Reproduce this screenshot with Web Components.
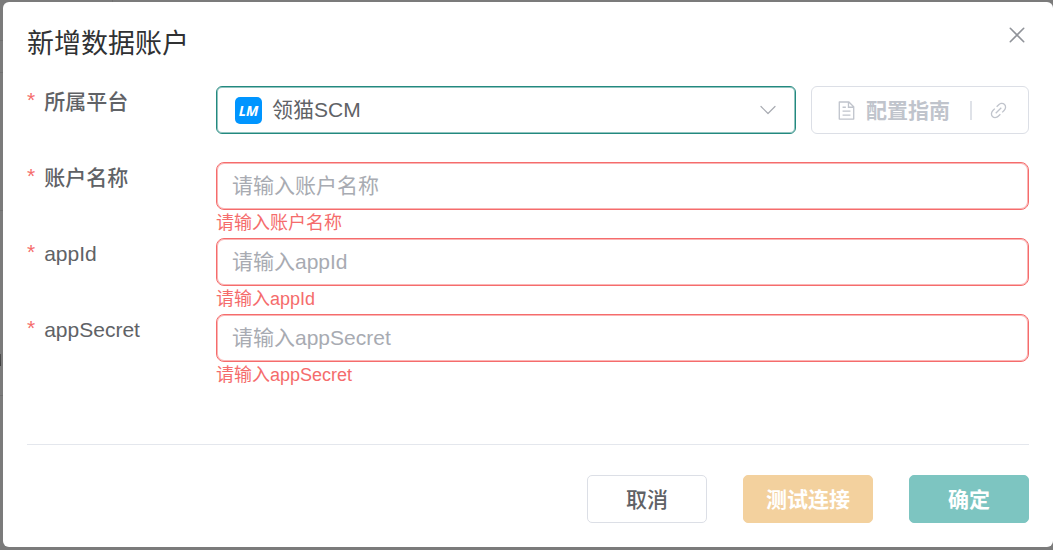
<!DOCTYPE html>
<html lang="zh-CN">
<head>
<meta charset="utf-8">
<meta name="viewport" content="width=device-width, initial-scale=1">
<title>新增数据账户</title>
<style>
    body {
        margin: 0;
        min-height: 100vh;
        font-family: "Liberation Sans", "Noto Sans CJK SC", sans-serif;
        font-size: 21px;
        color: #606266;
        background-color: #7b7b7b;
        background-image:
            linear-gradient(#707070, #707070), linear-gradient(#707070, #707070),
            linear-gradient(#707070, #707070), linear-gradient(#707070, #707070),
            linear-gradient(#707070, #707070), linear-gradient(#505050, #404040);
        background-repeat: no-repeat;
        background-size: 3px 1px, 3px 1px, 3px 1px, 3px 1px, 1px 2px, 1px 12px;
        background-position: 0 40px, 0 72px, 0 210px, 0 395px, 112px 0, 0 354px;
    }
</style>
</head>
<body>
<account-dialog heading="新增数据账户">
    <form-row label="所属平台">
        <platform-select></platform-select>
        <guide-button>配置指南</guide-button>
    </form-row>
    <form-row label="账户名称">
        <text-field name="账户名称"></text-field>
    </form-row>
    <form-row label="appId">
        <text-field name="appId"></text-field>
    </form-row>
    <form-row label="appSecret">
        <text-field name="appSecret"></text-field>
    </form-row>
    <dialog-button slot="footer">取消</dialog-button>
    <dialog-button slot="footer" type="warning">测试连接</dialog-button>
    <dialog-button slot="footer" type="primary">确定</dialog-button>
</account-dialog>

<script>
const dialogTemplate = document.createElement('template');
dialogTemplate.innerHTML = `
    <style>
        :host {
            display: block;
            padding: 2px 0 3px 3px;
        }
        .dialog {
            box-sizing: border-box;
            padding: 24px;
            border-radius: 6px;
            background-color: white;
        }
        header {
            display: flex;
            justify-content: space-between;
            align-items: flex-start;
            height: 60px;
        }
        h2 {
            margin: 0;
            font-size: 27px;
            font-weight: 400;
            line-height: 36px;
            color: #303133;
        }
        .close {
            display: flex;
            padding: 0;
            border: none;
            background: none;
            color: #909399;
            cursor: pointer;
        }
        .close svg {
            width: 24px;
            height: 18px;
        }
        .body {
            display: flex;
            flex-direction: column;
            padding-bottom: 54px;
        }
        footer {
            display: flex;
            justify-content: flex-end;
            gap: 36px;
            padding-top: 30px;
            border-top: 1px solid #e4e7ed;
        }
    </style>

    <section class="dialog" role="dialog" aria-labelledby="heading">
        <header>
            <h2 id="heading"></h2>
            <button class="close" type="button" aria-label="关闭">
                <svg viewBox="0 0 24 18" fill="none" stroke="currentColor" stroke-width="1.6" stroke-linecap="round">
                    <path d="M5.3 2.3l13.4 13.4M18.7 2.3L5.3 15.7"/>
                </svg>
            </button>
        </header>
        <div class="body"><slot></slot></div>
        <footer><slot name="footer"></slot></footer>
    </section>
`;

class AccountDialog extends HTMLElement {

    constructor() {
        super();
        this.attachShadow({ mode: 'open' });
        this.shadowRoot.appendChild(dialogTemplate.content.cloneNode(true));
    }

    connectedCallback() {
        this.shadowRoot.querySelector('h2').textContent = this.getAttribute('heading');
        this.shadowRoot.querySelector('.close').addEventListener('click', () => this.remove());
    }
}

const rowTemplate = document.createElement('template');
rowTemplate.innerHTML = `
    <style>
        :host {
            display: grid;
            grid-template-columns: 174px minmax(0, 1fr);
            column-gap: 15px;
            min-height: 76px;
        }
        .label {
            display: flex;
            gap: 9px;
            height: 32px;
            line-height: 32px;
            font-weight: 500;
        }
        .star {
            color: #f56c6c;
            font-weight: 400;
            line-height: 28px;
        }
        .content {
            display: flex;
            align-items: flex-start;
            gap: 15px;
        }
    </style>

    <div class="label"><span class="star" aria-hidden="true">*</span><label></label></div>
    <div class="content"><slot></slot></div>
`;

class FormRow extends HTMLElement {

    constructor() {
        super();
        this.attachShadow({ mode: 'open' });
        this.shadowRoot.appendChild(rowTemplate.content.cloneNode(true));
    }

    connectedCallback() {
        const label = this.shadowRoot.querySelector('label');
        label.textContent = this.getAttribute('label');
        // the control lives in another shadow root, so focus it by hand
        label.addEventListener('click', () => this.firstElementChild.focus());
    }
}

const selectTemplate = document.createElement('template');
selectTemplate.innerHTML = `
    <style>
        :host {
            display: grid;
            flex: 1;
            align-items: center;
        }
        select, .logo, svg {
            grid-area: 1 / 1;
        }
        select {
            appearance: none;
            box-sizing: border-box;
            width: 100%;
            height: 48px;
            padding: 0 50px 2px 55px;
            border: 1px solid #23897f;
            border-radius: 6px;
            box-shadow: inset 0 0 0 1px rgba(35, 137, 127, 0.5);
            background-color: white;
            color: #606266;
            font: inherit;
            outline: none;
        }
        .logo {
            z-index: 1;
            width: 27px;
            margin-left: 19px;
            border-radius: 5px;
            background-color: #0095ff;
            color: white;
            font: italic 700 14px/27px "Open Sans", sans-serif;
            text-align: center;
            pointer-events: none;
        }
        svg {
            z-index: 1;
            justify-self: end;
            width: 18px;
            height: 12px;
            margin-right: 19px;
            color: #a8abb2;
            pointer-events: none;
        }
    </style>

    <select aria-label="所属平台"><option>领猫SCM</option></select>
    <span class="logo" aria-hidden="true">LM</span>
    <svg viewBox="0 0 18 12" fill="none" stroke="currentColor" stroke-width="1.2" stroke-linecap="round" stroke-linejoin="round">
        <path d="M2 2.5l7 7 7-7"/>
    </svg>
`;

class PlatformSelect extends HTMLElement {

    constructor() {
        super();
        this.attachShadow({ mode: 'open', delegatesFocus: true });
        this.shadowRoot.appendChild(selectTemplate.content.cloneNode(true));
    }
}

const guideTemplate = document.createElement('template');
guideTemplate.innerHTML = `
    <style>
        :host {
            display: block;
        }
        button {
            display: flex;
            align-items: center;
            box-sizing: border-box;
            height: 48px;
            padding: 0 19px 0 24px;
            border: 1px solid #dcdfe6;
            border-radius: 6px;
            background-color: white;
            color: #c0c4cc;
            font: inherit;
            font-weight: 700;
        }
        svg {
            width: 21px;
            height: 21px;
            fill: currentColor;
        }
        .text {
            margin-left: 9px;
            padding-bottom: 2px;
        }
        .divider {
            width: 2px;
            height: 19px;
            margin: 0 16px 0 20px;
            background-color: #dfe2e8;
        }
    </style>

    <button type="button" disabled>
        <svg viewBox="0 0 1024 1024">
            <path d="M832 384H576V128H192v768h640zm-26.496-64L640 154.496V320zM160 64h480l256 256v608a32 32 0 0 1-32 32H160a32 32 0 0 1-32-32V96a32 32 0 0 1 32-32m160 448h384v64H320zm0-192h160v64H320zm0 384h384v64H320z"/>
        </svg>
        <span class="text"><slot></slot></span>
        <span class="divider"></span>
        <svg viewBox="0 0 1024 1024">
            <path d="M715.648 625.152 670.4 579.904l90.496-90.56c75.008-74.944 85.12-186.368 22.656-248.896-62.528-62.464-173.952-52.352-248.96 22.656L444.16 353.6l-45.248-45.248 90.496-90.496c100.032-99.968 251.968-110.08 339.456-22.656 87.488 87.488 77.312 239.424-22.656 339.456l-90.496 90.496zm-90.496 90.496-90.496 90.496C434.624 906.112 282.688 916.224 195.2 828.8c-87.488-87.488-77.312-239.424 22.656-339.456l90.496-90.496 45.248 45.248-90.496 90.56c-75.008 74.944-85.12 186.368-22.656 248.896 62.528 62.464 173.952 52.352 248.96-22.656l90.496-90.496zm0-362.048 45.248 45.248L398.848 670.4 353.6 625.152z"/>
        </svg>
    </button>
`;

class GuideButton extends HTMLElement {

    constructor() {
        super();
        this.attachShadow({ mode: 'open' });
        this.shadowRoot.appendChild(guideTemplate.content.cloneNode(true));
    }
}

const fieldTemplate = document.createElement('template');
fieldTemplate.innerHTML = `
    <style>
        :host {
            display: block;
            flex: 1;
        }
        input {
            display: block;
            box-sizing: border-box;
            width: 100%;
            height: 48px;
            padding: 0 15px;
            border: 1px solid #f56c6c;
            border-radius: 8px;
            box-shadow: inset 0 0 0 1px rgba(245, 108, 108, 0.5);
            background-color: white;
            color: #606266;
            font: inherit;
            outline: none;
        }
        input::placeholder {
            color: #a8abb2;
        }
        .error {
            color: #f56c6c;
            font-size: 18px;
            line-height: 26px;
        }
    </style>

    <input type="text" aria-describedby="error" aria-invalid="true">
    <div class="error" id="error"></div>
`;

class TextField extends HTMLElement {

    constructor() {
        super();
        this.attachShadow({ mode: 'open', delegatesFocus: true });
        this.shadowRoot.appendChild(fieldTemplate.content.cloneNode(true));
    }

    connectedCallback() {
        const name = this.getAttribute('name');
        this.input = this.shadowRoot.querySelector('input');
        this.error = this.shadowRoot.querySelector('.error');

        this.input.placeholder = '请输入' + name;
        this.input.setAttribute('aria-label', name);
        this.error.textContent = '请输入' + name;
    }
}

const buttonTemplate = document.createElement('template');
buttonTemplate.innerHTML = `
    <style>
        :host {
            display: block;
        }
        button {
            box-sizing: border-box;
            min-width: 120px;
            height: 48px;
            padding: 0 22px 2px;
            border: 1px solid #dcdfe6;
            border-radius: 5px;
            background-color: white;
            color: #606266;
            font: inherit;
            font-weight: 500;
            cursor: pointer;
        }
        :host([type]) button {
            color: white;
            font-weight: 700;
        }
        :host([type="warning"]) button {
            border-color: #f3d19e;
            background-color: #f3d19e;
        }
        :host([type="primary"]) button {
            border-color: #7dc5c1;
            background-color: #7dc5c1;
        }
    </style>

    <button type="button"><slot></slot></button>
`;

class DialogButton extends HTMLElement {

    constructor() {
        super();
        this.attachShadow({ mode: 'open' });
        this.shadowRoot.appendChild(buttonTemplate.content.cloneNode(true));
    }
}

window.customElements.define('account-dialog', AccountDialog);
window.customElements.define('form-row', FormRow);
window.customElements.define('platform-select', PlatformSelect);
window.customElements.define('guide-button', GuideButton);
window.customElements.define('text-field', TextField);
window.customElements.define('dialog-button', DialogButton);
</script>
</body>
</html>
